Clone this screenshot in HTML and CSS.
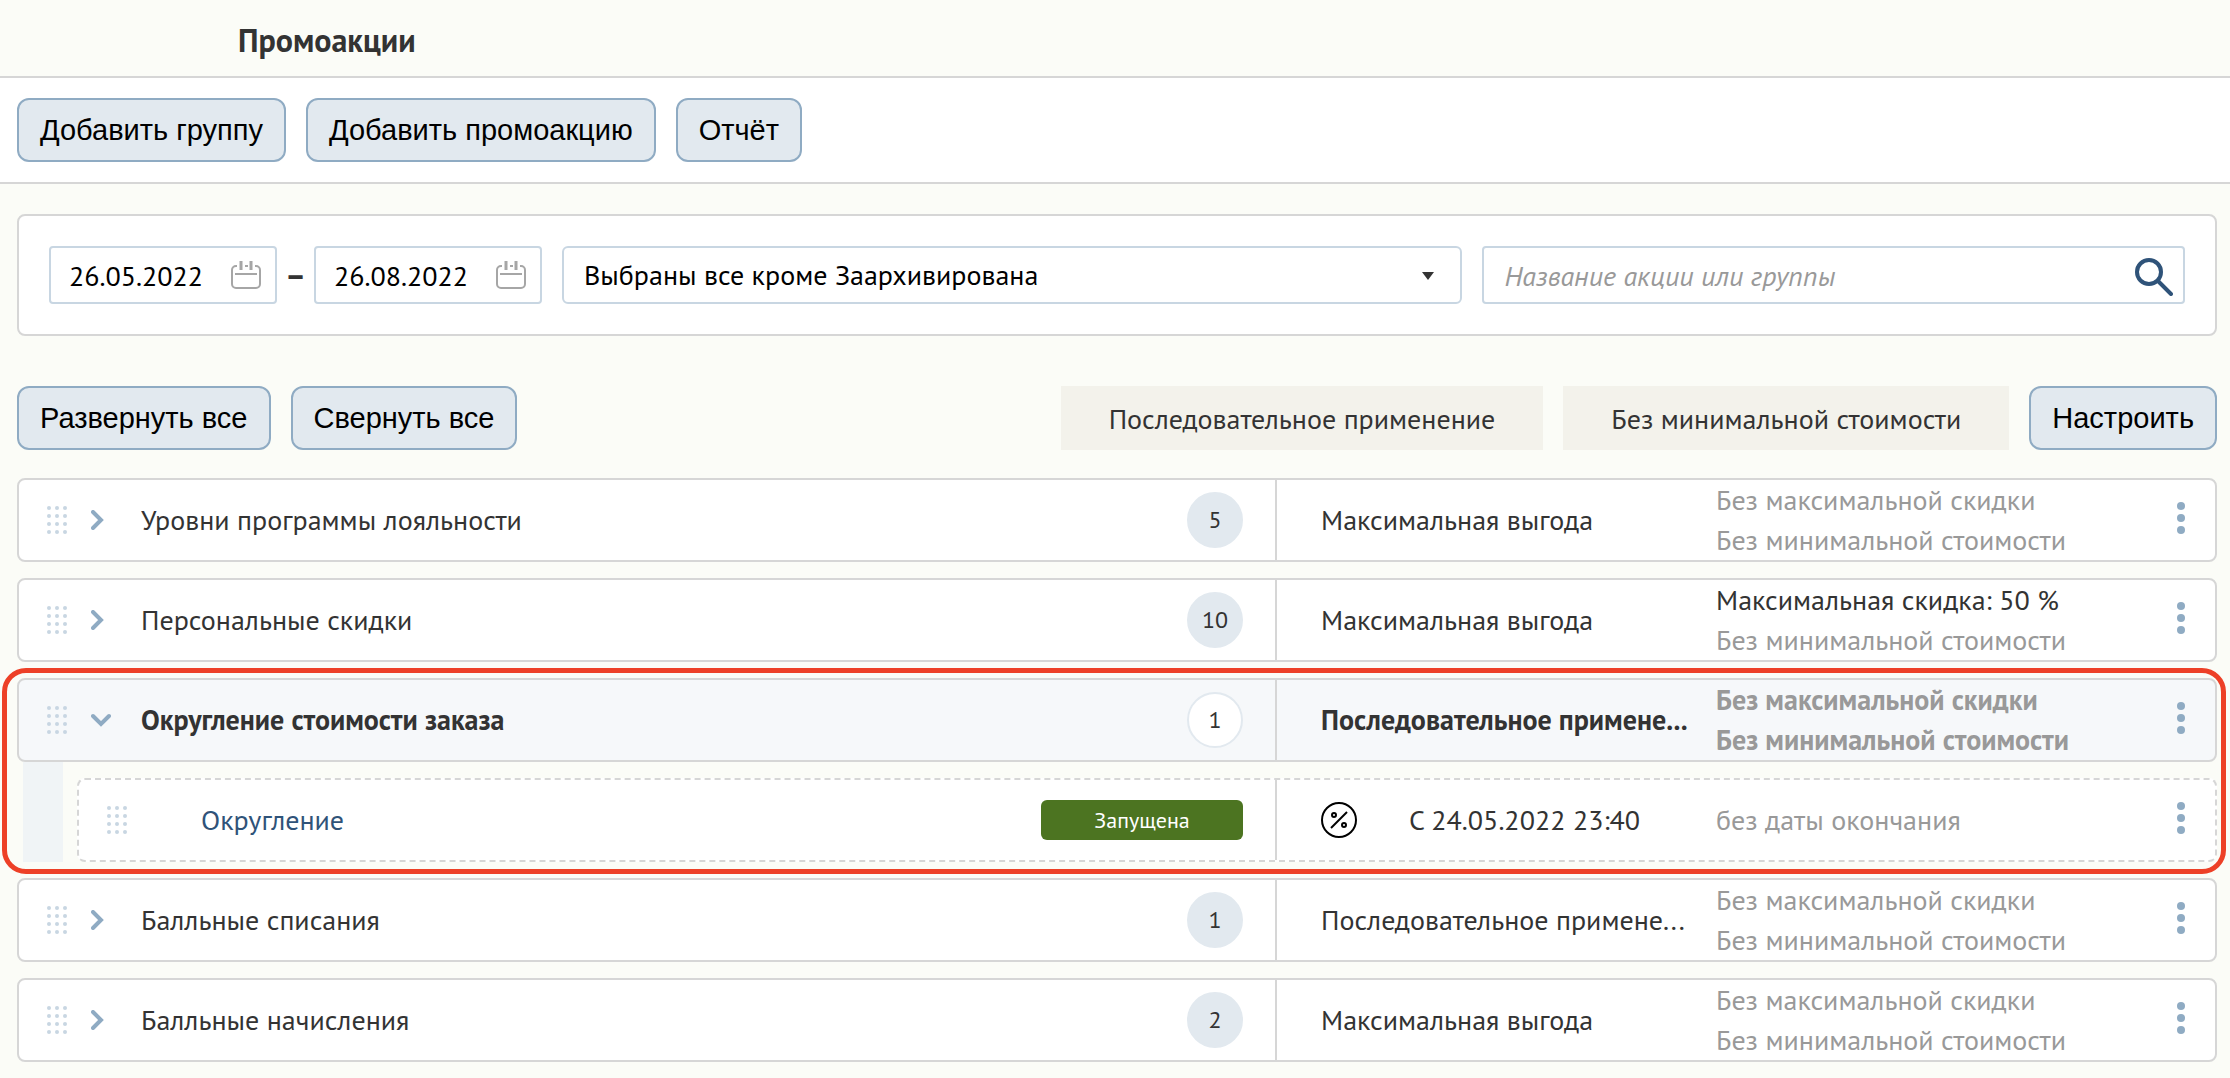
FILE: index.html
```html
<!DOCTYPE html>
<html lang="ru">
<head>
<meta charset="utf-8">
<title>Промоакции</title>
<link rel="stylesheet" href="styles.css">
</head>
<body>
<svg class="sprite" aria-hidden="true">
  <symbol id="grip" viewBox="0 0 20 28">
    <g fill="#c8d6e2">
      <circle cx="2" cy="2" r="2"/><circle cx="10" cy="2" r="2"/><circle cx="18" cy="2" r="2"/>
      <circle cx="2" cy="10" r="2"/><circle cx="10" cy="10" r="2"/><circle cx="18" cy="10" r="2"/>
      <circle cx="2" cy="18" r="2"/><circle cx="10" cy="18" r="2"/><circle cx="18" cy="18" r="2"/>
      <circle cx="2" cy="26" r="2"/><circle cx="10" cy="26" r="2"/><circle cx="18" cy="26" r="2"/>
    </g>
  </symbol>
  <symbol id="chevron-right" viewBox="0 0 20 20">
    <path d="M2 2l8 8-8 8" fill="none" stroke="#8fabc3" stroke-width="4" stroke-linecap="round"/>
  </symbol>
  <symbol id="chevron-down" viewBox="0 0 20 20">
    <path d="M2 6l8 8 8-8" fill="none" stroke="#8fabc3" stroke-width="4" stroke-linecap="round"/>
  </symbol>
  <symbol id="dots" viewBox="0 0 8 32">
    <g fill="#8fabc3"><circle cx="4" cy="4" r="4"/><circle cx="4" cy="16" r="4"/><circle cx="4" cy="28" r="4"/></g>
  </symbol>
  <symbol id="calendar" viewBox="0 0 30 30">
    <g fill="none" stroke="#a6a6a6" stroke-width="2">
      <path d="M6 5H5a4 4 0 0 0-4 4v14a4 4 0 0 0 4 4h20a4 4 0 0 0 4-4V9a4 4 0 0 0-4-4h-1M14 5h3M4 13h22"/>
      <path d="M10 0v9M20 0v9" stroke-width="3"/>
    </g>
  </symbol>
</svg>

<header class="page-header"><h1 class="page-title">Промоакции</h1></header>
<div class="toolbar">
  <button class="btn" type="button">Добавить группу</button>
  <button class="btn" type="button">Добавить промоакцию</button>
  <button class="btn" type="button">Отчёт</button>
</div>

<main class="content">
  <form class="filters">
    <div class="field field-date">
      <input class="input" type="text" value="26.05.2022" aria-label="Дата начала">
      <svg class="icon-calendar" aria-hidden="true"><use href="#calendar"/></svg>
    </div>
    <span class="dash">–</span>
    <div class="field field-date">
      <input class="input" type="text" value="26.08.2022" aria-label="Дата окончания">
      <svg class="icon-calendar" aria-hidden="true"><use href="#calendar"/></svg>
    </div>
    <div class="field field-status">
      <select class="input select" aria-label="Статус"><option>Выбраны все кроме Заархивирована</option></select>
      <svg class="icon-caret" viewBox="0 0 12 8" aria-hidden="true"><path d="M0 0h12L6 8z" fill="#333"/></svg>
    </div>
    <div class="field field-search">
      <input class="input" type="text" placeholder="Название акции или группы" aria-label="Поиск">
      <button class="search-btn" type="button" aria-label="Найти">
        <svg class="icon-search" viewBox="0 0 38 38" aria-hidden="true"><g fill="none" stroke="#2f5379" stroke-width="4"><circle cx="14" cy="14" r="12"/><path d="M24 24l12 12M23 23l2 2" stroke-linecap="round"/></g></svg>
      </button>
    </div>
  </form>

  <div class="actions">
    <button class="btn" type="button">Развернуть все</button>
    <button class="btn" type="button">Свернуть все</button>
    <span class="tag tag-first">Последовательное применение</span>
    <span class="tag">Без минимальной стоимости</span>
    <button class="btn" type="button">Настроить</button>
  </div>

  <div class="groups">
    <section class="row">
      <div class="row-main">
        <svg class="icon-grip" aria-hidden="true"><use href="#grip"/></svg>
        <button class="toggle" type="button" aria-label="Развернуть"><svg class="icon-chevron" aria-hidden="true"><use href="#chevron-right"/></svg></button>
        <span class="name">Уровни программы лояльности</span>
        <span class="count">5</span>
      </div>
      <div class="row-info">
        <span class="mode">Максимальная выгода</span>
        <div class="limits muted"><span>Без максимальной скидки</span><span>Без минимальной стоимости</span></div>
        <button class="more" type="button" aria-label="Меню"><svg class="icon-dots" aria-hidden="true"><use href="#dots"/></svg></button>
      </div>
    </section>

    <section class="row">
      <div class="row-main">
        <svg class="icon-grip" aria-hidden="true"><use href="#grip"/></svg>
        <button class="toggle" type="button" aria-label="Развернуть"><svg class="icon-chevron" aria-hidden="true"><use href="#chevron-right"/></svg></button>
        <span class="name">Персональные скидки</span>
        <span class="count">10</span>
      </div>
      <div class="row-info">
        <span class="mode">Максимальная выгода</span>
        <div class="limits muted"><span class="strong">Максимальная скидка: 50 %</span><span>Без минимальной стоимости</span></div>
        <button class="more" type="button" aria-label="Меню"><svg class="icon-dots" aria-hidden="true"><use href="#dots"/></svg></button>
      </div>
    </section>

    <div class="expanded">
      <section class="row row-open">
        <div class="row-main">
          <svg class="icon-grip" aria-hidden="true"><use href="#grip"/></svg>
          <button class="toggle" type="button" aria-label="Свернуть"><svg class="icon-chevron" aria-hidden="true"><use href="#chevron-down"/></svg></button>
          <span class="name">Округление стоимости заказа</span>
          <span class="count">1</span>
        </div>
        <div class="row-info">
          <span class="mode">Последовательное примене...</span>
          <div class="limits muted"><span>Без максимальной скидки</span><span>Без минимальной стоимости</span></div>
          <button class="more" type="button" aria-label="Меню"><svg class="icon-dots" aria-hidden="true"><use href="#dots"/></svg></button>
        </div>
      </section>
      <div class="children">
        <section class="row row-child">
          <div class="row-main">
            <svg class="icon-grip" aria-hidden="true"><use href="#grip"/></svg>
            <a class="name promo-link" href="#">Округление</a>
            <span class="status">Запущена</span>
          </div>
          <div class="row-info">
            <span class="period">
              <svg class="icon-percent" viewBox="0 0 36 36" aria-hidden="true"><g fill="none" stroke="#000" stroke-width="2"><circle cx="18" cy="18" r="17"/><path d="M10 26L26 10"/><circle cx="13" cy="13" r="2"/><circle cx="23" cy="23" r="2"/></g></svg>
              С 24.05.2022 23:40
            </span>
            <div class="limits muted"><span>без даты окончания</span></div>
            <button class="more" type="button" aria-label="Меню"><svg class="icon-dots" aria-hidden="true"><use href="#dots"/></svg></button>
          </div>
        </section>
      </div>
    </div>

    <section class="row">
      <div class="row-main">
        <svg class="icon-grip" aria-hidden="true"><use href="#grip"/></svg>
        <button class="toggle" type="button" aria-label="Развернуть"><svg class="icon-chevron" aria-hidden="true"><use href="#chevron-right"/></svg></button>
        <span class="name">Балльные списания</span>
        <span class="count">1</span>
      </div>
      <div class="row-info">
        <span class="mode">Последовательное примене...</span>
        <div class="limits muted"><span>Без максимальной скидки</span><span>Без минимальной стоимости</span></div>
        <button class="more" type="button" aria-label="Меню"><svg class="icon-dots" aria-hidden="true"><use href="#dots"/></svg></button>
      </div>
    </section>

    <section class="row">
      <div class="row-main">
        <svg class="icon-grip" aria-hidden="true"><use href="#grip"/></svg>
        <button class="toggle" type="button" aria-label="Развернуть"><svg class="icon-chevron" aria-hidden="true"><use href="#chevron-right"/></svg></button>
        <span class="name">Балльные начисления</span>
        <span class="count">2</span>
      </div>
      <div class="row-info">
        <span class="mode">Максимальная выгода</span>
        <div class="limits muted"><span>Без максимальной скидки</span><span>Без минимальной стоимости</span></div>
        <button class="more" type="button" aria-label="Меню"><svg class="icon-dots" aria-hidden="true"><use href="#dots"/></svg></button>
      </div>
    </section>
  </div>
</main>
</body>
</html>
```

FILE: styles.css
```css
* { box-sizing: border-box; }

body {
  margin: 0;
  background: #fbfcf7;
  color: #333;
  font: 28px/40px "PT Sans", "Noto Sans", sans-serif;
}

button, input, select { font: inherit; color: inherit; }
button { cursor: pointer; }
svg { display: block; flex: none; }

.sprite { position: absolute; width: 0; height: 0; }

.page-header { padding: 20px 238px 16px; border-bottom: 2px solid #d6d6d6; }
.page-title { margin: 0; font-size: 32px; line-height: 40px; font-weight: 700; }

.toolbar {
  display: flex;
  gap: 20px;
  padding: 20px 17px;
  background: #fff;
  border-bottom: 2px solid #d6d6d6;
}

.btn {
  height: 64px;
  padding: 0 21px;
  border: 2px solid #8fabc3;
  border-radius: 12px;
  background: #e2e9ef;
  color: #000;
  font-family: "Liberation Sans", Arial, sans-serif;
  font-size: 29px;
  white-space: nowrap;
}

.content { padding: 30px 13px 16px 17px; }

.filters {
  display: flex;
  align-items: center;
  padding: 30px;
  background: #fff;
  border: 2px solid #d6d6d6;
  border-radius: 8px;
}
.field { position: relative; min-width: 0; }
.field-date { width: 228px; flex: none; }
.field-status { flex: 901 1 0; margin: 0 20px; }
.field-search { flex: 703 1 0; }
.dash { width: 37px; text-align: center; flex: none; font-size: 32px; font-weight: 700; }

.input {
  display: block;
  width: 100%;
  height: 58px;
  padding: 0 20px;
  border: 2px solid #c8d6e2;
  border-radius: 4px;
  background: #fff;
  color: #000;
}
.field-date .input { padding: 0 18px; }
.input::placeholder { color: #999; font-style: italic; opacity: 1; }
.select { appearance: none; border-radius: 6px; }
.icon-calendar { position: absolute; top: 15px; right: 16px; width: 30px; height: 30px; pointer-events: none; }
.icon-caret { position: absolute; top: 26px; right: 28px; width: 12px; height: 8px; pointer-events: none; }
.search-btn { position: absolute; top: 12px; right: 12px; padding: 0; border: 0; background: none; }
.icon-search { width: 38px; height: 38px; }

.actions { display: flex; gap: 20px; margin-top: 50px; }
.tag { padding: 13px 48px 11px; background: #f3f2eb; white-space: nowrap; }
.tag-first { margin-left: auto; }

.groups { display: grid; gap: 16px; margin-top: 28px; }

.row {
  display: grid;
  grid-template-columns: minmax(0, 1fr) 938px;
  height: 84px;
  background: #fff;
  border: 2px solid #d6d6d6;
  border-radius: 8px;
}
.row-main { display: flex; align-items: center; padding: 0 32px 0 28px; border-right: 2px solid #d6d6d6; }
.row-info { display: grid; grid-template-columns: 375px minmax(0, 1fr) 8px; column-gap: 20px; align-items: center; padding: 0 30px 0 44px; }

.icon-grip { width: 20px; height: 28px; }
.toggle, .more { padding: 0; border: 0; background: none; }
.toggle { width: 20px; margin: 0 30px 0 24px; }
.more { padding-bottom: 4px; }
.icon-chevron { width: 20px; height: 20px; }
.icon-dots { width: 8px; height: 32px; }

.name { flex: 1; white-space: nowrap; overflow: hidden; text-overflow: ellipsis; }
.count {
  width: 56px;
  height: 56px;
  border: 2px solid #e2e9ef;
  border-radius: 50%;
  background: #e2e9ef;
  font-size: 24px;
  font-weight: 400;
  line-height: 52px;
  text-align: center;
}
.mode { white-space: nowrap; }
.limits { display: grid; white-space: nowrap; }
.muted { color: #999; }
.strong { color: #333; }

.row-open { background: #f6f8fa; font-weight: 700; }
.row-open .count { background: #fff; }

.expanded { position: relative; }
.expanded::after {
  content: "";
  position: absolute;
  inset: -10px -9px -12px -15px;
  border: 5px solid #ed4027;
  border-radius: 24px;
  pointer-events: none;
}
.children { margin-left: 6px; padding: 16px 0 0 14px; border-left: 40px solid #f0f4f6; }
.row-child { border-style: dashed; }
.promo-link { margin-left: 74px; color: #2f5379; text-decoration: none; }
.status { width: 202px; height: 40px; border-radius: 6px; background: #4c7421; color: #fff; font-size: 22px; text-align: center; }
.period { display: flex; align-items: center; gap: 52px; white-space: nowrap; }
.icon-percent { width: 36px; height: 36px; }
```
